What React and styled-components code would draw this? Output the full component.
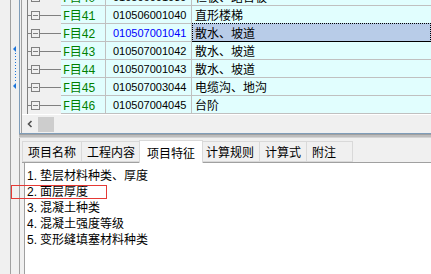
import React from "react";
import styled, { createGlobalStyle } from "styled-components";

const Global = createGlobalStyle`
  html, body { margin: 0; padding: 0; }
  body {
    background: #f0f0f0;
    font-family: "Liberation Sans", "Noto Sans CJK SC", sans-serif;
    font-size: 12px;
    color: #000;
  }
`;

const Page = styled.div`
  position: relative;
  width: 431px;
  height: 274px;
  overflow: hidden;
  display: flex;
  background: #f0f0f0;
`;

const LeftStrip = styled.div`
  width: 10px;
  border-right: 1px solid #a0a0a0;
  flex: none;
`;

const Gutter = styled.div`
  width: 8px;
  flex: none;
  padding-top: 45px;
  display: flex;
  justify-content: center;
  align-items: flex-start;
`;

const Main = styled.div`
  flex: 1;
  display: flex;
  flex-direction: column;
  min-width: 0;
`;

const UpperPanel = styled.div`
  height: 133px;
  border-left: 1px solid #7f9db9;
  border-bottom: 1px solid #7f9db9;
  padding-left: 1px;
  display: flex;
  flex-direction: column;
  flex: none;
`;

const GridInner = styled.div`
  flex: 1;
  border-left: 1px solid #a0a0a0;
  display: flex;
  flex-direction: column;
`;

const RowsViewport = styled.div`
  height: 114px;
  overflow: hidden;
  border-bottom: 1px solid #ffffff;
`;

const Rows = styled.div`
  margin-top: -12px;
`;

const Row = styled.div`
  display: flex;
  height: 18px;
`;

const TreeCell = styled.div`
  width: 39px;
  flex: none;
  height: 18px;
`;

const Cell = styled.div`
  height: 17px;
  border-bottom: 1px solid #c0c0c0;
  background: #e1fefe;
  display: flex;
  align-items: center;
  white-space: nowrap;
  overflow: hidden;
  box-sizing: content-box;
`;

const FCell = styled(Cell)`
  width: 42px;
  padding-left: 2px;
  border-right: 1px solid #c0c0c0;
  color: #008000;
  font-size: 12px;
  font-family: "Liberation Mono", "Noto Sans CJK SC", monospace;
  letter-spacing: -0.4px;
`;

const CodeCell = styled(Cell)`
  width: 78px;
  padding-left: 7px;
  border-right: 1px solid #c0c0c0;
  font-size: 11px;
  color: ${(p) => (p.$active ? "#0000ff" : "#000")};
`;

const DescCell = styled(Cell)`
  flex: 1;
  padding-left: 3px;
  background: ${(p) => (p.$selected ? "#b8cce8" : "#e1fefe")};
  ${(p) =>
    p.$selected
      ? `border: 1px dotted #000; border-bottom: 1px solid #000; margin-top: -1px; height: 17px; padding-left: 2px;`
      : ""}
`;

const ScrollBar = styled.div`
  height: 18px;
  display: flex;
  align-items: center;
`;

const ScrollArrow = styled.div`
  width: 16px;
  height: 18px;
  display: flex;
  align-items: center;
  justify-content: center;
`;

const ScrollThumb = styled.div`
  width: 16px;
  height: 15px;
  background: #cdcdcd;
`;

const Splitter = styled.div`
  height: 2px;
  flex: none;
  border-top: 1px solid #a0a0a0;
  border-bottom: 1px solid #d4d4d4;
  background: #bdbdbd;
`;

const LowerPanel = styled.div`
  flex: 1;
  border-left: 1px solid #a0a0a0;
  padding-left: 2px;
  display: flex;
  flex-direction: column;
  min-height: 0;
`;

const TabStrip = styled.div`
  height: 24px;
  display: flex;
  align-items: flex-end;
  border-bottom: 1px solid #a0a0a0;
`;

const Tab = styled.div`
  height: ${(p) => (p.$active ? "23px" : "21px")};
  min-width: 46px;
  box-sizing: border-box;
  padding: 0 ${(p) => (p.$active ? "7px" : "5px")};
  margin: 0 ${(p) => (p.$active ? "-2px" : "0")} ${(p) => (p.$active ? "-1px" : "0")};
  border: 1px solid #d9d9d9;
  border-bottom: ${(p) => (p.$active ? "none" : "1px solid #d9d9d9")};
  border-left-width: ${(p) => (p.$first || p.$active ? "1px" : "0")};
  background: ${(p) => (p.$active ? "#ffffff" : "#f0f0f0")};
  position: relative;
  z-index: ${(p) => (p.$active ? 1 : 0)};
  display: flex;
  align-items: center;
  justify-content: ${(p) => (p.$short ? "flex-start" : "center")};
  font-family: "Noto Sans CJK SC", sans-serif;
  font-size: 12px;
  white-space: nowrap;
`;

const Content = styled.div`
  flex: 1;
  margin-left: 2px;
  border-left: 1px solid #a0a0a0;
  background: #ffffff;
  padding: 4px 0 0 2px;
`;

const Line = styled.div`
  height: 16px;
  line-height: 16px;
  white-space: nowrap;
  font-family: "Noto Sans CJK SC", sans-serif;
  font-size: 12px;
`;

const Num = styled.span`
  font-family: "Liberation Sans", sans-serif;
  margin-right: 3px;
`;

const Highlight = styled.div`
  position: absolute;
  left: 11px;
  top: 185px;
  width: 94px;
  height: 12px;
  border: 1px solid #e53935;
  pointer-events: none;
`;

const TreeNode = () => (
  <svg width="39" height="18" viewBox="0 0 39 18">
    <line x1="5.5" y1="0" x2="5.5" y2="18" stroke="#808080" />
    <line x1="5" y1="9.5" x2="9" y2="9.5" stroke="#808080" />
    <rect x="9.5" y="5.5" width="8" height="8" fill="none" stroke="#808080" />
    <line x1="11" y1="9.5" x2="16" y2="9.5" stroke="#808080" />
    <line x1="18" y1="9.5" x2="39" y2="9.5" stroke="#808080" />
  </svg>
);

const GutterMarks = () => (
  <svg width="8" height="44" viewBox="0 0 8 44">
    <path d="M2 4 L5 1 L5 7 Z" fill="#1a73d9" />
    <line x1="4.5" y1="8" x2="4.5" y2="37" stroke="#1a73d9" strokeDasharray="1 2" />
    <path d="M2 41 L5 38 L5 44 Z" fill="#1a73d9" />
  </svg>
);

const Chevron = () => (
  <svg width="8" height="8" viewBox="0 0 8 8">
    <path d="M5.5 1 L2.5 4 L5.5 7" fill="none" stroke="#505050" strokeWidth="1.6" />
  </svg>
);

const rows = [
  { f: "F目40", code: "010506001039", desc: "栏板、踏台板" },
  { f: "F目41", code: "010506001040", desc: "直形楼梯" },
  { f: "F目42", code: "010507001041", desc: "散水、坡道", active: true },
  { f: "F目43", code: "010507001042", desc: "散水、坡道" },
  { f: "F目44", code: "010507001043", desc: "散水、坡道" },
  { f: "F目45", code: "010507003044", desc: "电缆沟、地沟" },
  { f: "F目46", code: "010507004045", desc: "台阶" },
];

const tabs = ["项目名称", "工程内容", "项目特征", "计算规则", "计算式", "附注"];

const features = [
  "垫层材料种类、厚度",
  "面层厚度",
  "混凝土种类",
  "混凝土强度等级",
  "变形缝填塞材料种类",
];

export default function App() {
  return (
    <>
      <Global />
      <Page>
        <LeftStrip />
        <Gutter>
          <GutterMarks />
        </Gutter>
        <Main>
          <UpperPanel>
            <GridInner>
              <RowsViewport>
                <Rows>
                  {rows.map((r) => (
                    <Row key={r.f}>
                      <TreeCell>
                        <TreeNode />
                      </TreeCell>
                      <FCell>{r.f}</FCell>
                      <CodeCell $active={r.active}>{r.code}</CodeCell>
                      <DescCell $selected={r.active}>{r.desc}</DescCell>
                    </Row>
                  ))}
                </Rows>
              </RowsViewport>
              <ScrollBar>
                <ScrollArrow>
                  <Chevron />
                </ScrollArrow>
                <ScrollThumb />
              </ScrollBar>
            </GridInner>
          </UpperPanel>
          <Splitter />
          <LowerPanel>
            <TabStrip>
              {tabs.map((t, i) => (
                <Tab
                  key={t}
                  $active={t === "项目特征"}
                  $first={i === 0}
                  $short={t.length <= 2}
                >
                  {t}
                </Tab>
              ))}
            </TabStrip>
            <Content>
              {features.map((f, i) => (
                <Line key={f}>
                  <Num>{i + 1}.</Num>
                  {f}
                </Line>
              ))}
            </Content>
          </LowerPanel>
        </Main>
        <Highlight />
      </Page>
    </>
  );
}
